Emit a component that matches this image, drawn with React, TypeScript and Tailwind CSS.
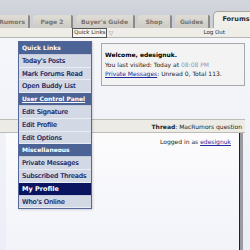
import React from "react";

const menu: { label: string; kind: "head" | "item" | "active" }[] = [
  { label: "Quick Links", kind: "head" },
  { label: "Today's Posts", kind: "item" },
  { label: "Mark Forums Read", kind: "item" },
  { label: "Open Buddy List", kind: "item" },
  { label: "User Control Panel", kind: "head" },
  { label: "Edit Signature", kind: "item" },
  { label: "Edit Profile", kind: "item" },
  { label: "Edit Options", kind: "item" },
  { label: "Miscellaneous", kind: "head" },
  { label: "Private Messages", kind: "item" },
  { label: "Subscribed Threads", kind: "item" },
  { label: "My Profile", kind: "active" },
  { label: "Who's Online", kind: "item" },
];

function Tab({ label, w, active, extra = "text-center" }: { label: string; w: string; active?: boolean; extra?: string }) {
  if (active) {
    return (
      <div
        className={`${w} h-[17px] shrink-0 rounded-tl-[5px] border-l border-t border-[#a9a69e] bg-[#f0efea] text-center text-[6.5px] font-bold leading-[15px] text-[#2a2a2a]`}
      >
        {label}
      </div>
    );
  }
  return (
    <div
      className={`${w} ${extra} h-[13px] shrink-0 rounded-tl-[4px] rounded-tr-[2px] border-r-2 border-[#8d8a83] bg-gradient-to-b from-[#e0ddd7] to-[#cecbc4] text-[6px] font-bold leading-[13px] text-[#77746d]`}
    >
      {label}
    </div>
  );
}

export default function App() {
  return (
    <div className="relative h-[250px] w-[250px] overflow-hidden bg-gradient-to-b from-[#f7f8fb] to-[#eceef7] font-['DejaVu_Sans',sans-serif]">
      {/* tabs */}
      <div className="flex h-[28px] items-end bg-gradient-to-b from-[#d3d6dd] to-[#c9ccd4]">
        <div className="-ml-[20px] flex items-end gap-[3px]">
          <Tab label="Rumors" w="w-[50px]" extra="text-right pr-[3px]" />
          <Tab label="Page 2" w="w-[40px]" />
          <Tab label="Buyer's Guide" w="w-[59px]" />
          <Tab label="Shop" w="w-[34px]" />
          <Tab label="Guides" w="w-[35px]" />
          <Tab label="Forums" w="w-[45px]" active />
        </div>
      </div>

      {/* quick links bar */}
      <div className="flex h-[10px] items-center border-b border-[#b4b4b0] bg-[#eeede8] text-[5.5px] text-[#2b2b2b]">
        <div className="ml-[72px] flex h-[10px] items-center border border-[#555] bg-[#f4f4f0] px-[1px]">
          Quick Links
        </div>
        <div className="flex h-[10px] w-[7px] items-center justify-center text-[6px] text-[#8a8fa8]">▽</div>
        <div className="ml-auto mr-[25px]">Log Out</div>
      </div>

      {/* content */}
      <div className="flex flex-col">
        <div className="ml-[101px] mt-[5px] h-[43px] w-[144px] border border-[#a8a8a8] bg-[#f3f3f3] px-[3px] pt-[6px] text-[6px] leading-[9.5px] text-[#222]">
          <div className="font-bold text-black">Welcome, edesignuk.</div>
          <div>
            You last visited: Today at <span className="text-[#8a9ac0]">08:08 PM</span>
          </div>
          <div>
            <span className="text-[#1c2a9a] underline">Private Messages</span>: Unread 0, Total 113.
          </div>
        </div>

        <div className="mt-[33px] flex h-[14px] w-[245px] items-center justify-end border-y border-[#bdbcb6] bg-[#ecebe5] pr-[3px] text-[6px] text-[#222]">
          <span className="font-bold">Thread</span>: MacRumors question
        </div>

        <div className="ml-[6px] h-[130px] w-[237px] border-r-[3px] border-[#9a9aa2] bg-gradient-to-b from-[#fcfcfd] to-[#f1f2f9]">
          <div className="h-full border-r border-[#222] pr-[8px] pt-[4px] text-right text-[6px] text-[#222]">
            Logged in as <span className="text-[#1c2a9a] underline">edesignuk</span>
          </div>
        </div>
      </div>

      {/* quick links popup menu */}
      <div className="absolute left-[18px] top-[41px] w-[74px] border border-[#56689a] bg-[#d3d8e5] shadow-[1px_1px_2px_rgba(0,0,0,0.15)]">
        {menu.map((m) => (
          <div
            key={m.label}
            className={
              m.kind === "head"
                ? `h-[12.8px] overflow-hidden whitespace-nowrap border-b border-[#c4cadb] bg-[#4b6495] pl-[3px] text-[6px] font-bold leading-[12px] text-white ${m.label === "User Control Panel" ? "underline" : ""}`
                : m.kind === "active"
                  ? "h-[12.8px] overflow-hidden whitespace-nowrap border-b border-[#c4cadb] bg-[#0b1460] pl-[3px] text-[6.5px] font-bold leading-[12px] text-white"
                  : "h-[12.8px] overflow-hidden whitespace-nowrap border-b border-[#e9ecf3] pl-[3px] text-[6.5px] leading-[12px] text-[#26306a] [text-shadow:0.3px_0_0_#26306a]"
            }
          >
            {m.label}
          </div>
        ))}
      </div>
    </div>
  );
}
